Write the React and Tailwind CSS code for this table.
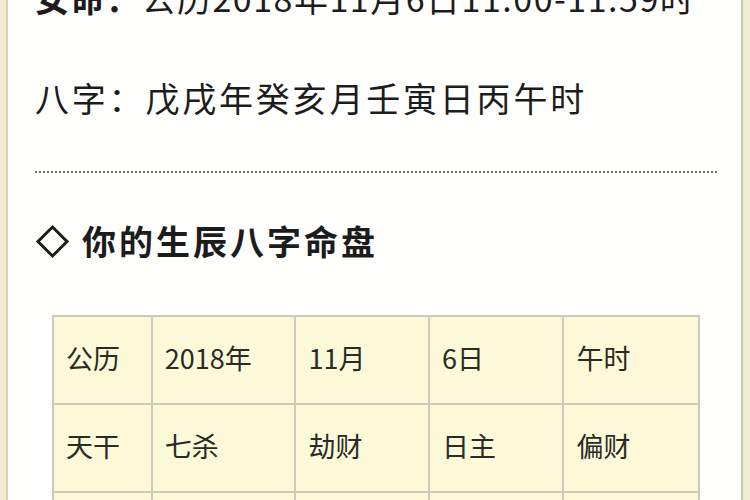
import React from "react";

const rows = [
  ["公历", "2018年", "11月", "6日", "午时"],
  ["天干", "七杀", "劫财", "日主", "偏财"],
  ["地支", "正官", "正财", "比肩", "伤官"],
];

const widths = ["w-[99px]", "w-[144px]", "w-[134px]", "w-[135px]", "w-[136px]"];

export default function App() {
  return (
    <div
      className="h-[500px] w-[750px] overflow-hidden bg-[#f1ebd4] flex"
      style={{ fontFamily: '"Noto Sans CJK SC", "Noto Sans", sans-serif' }}
    >
      <div className="ml-[6px] mr-[7px] flex-1 border-l-2 border-r-2 border-l-[#d6cfb5] border-r-[#c9c6bc] bg-[#fefefc] overflow-hidden">
        <div className="-mt-[30px] pl-[27px] pr-[24px] text-[#1c1c1c]">
          <div className="h-[56px] leading-[56px] text-[34px] tracking-[1.5px] whitespace-nowrap">
            <span className="font-bold">女命：</span>
            <span>公历2018年11月6日11:00-11:59时</span>
          </div>
          <div className="mt-[44px] h-[56px] leading-[56px] text-[34px] tracking-[2.8px] whitespace-nowrap">
            <span>八字：</span>
            <span>戊戌年癸亥月壬寅日丙午时</span>
          </div>
          <div className="mt-[45px] border-t-2 border-dotted border-[#6e6e6e]" />
          <div className="mt-[40px] h-[56px] flex items-center gap-[12px]">
            <svg width="35" height="35" viewBox="0 0 35 35" className="shrink-0">
              <path d="M17.5 3 L32 17.5 L17.5 32 L3 17.5 Z" fill="none" stroke="#1c1c1c" strokeWidth="3" strokeLinejoin="miter" />
            </svg>
            <span className="text-[34px] font-bold leading-[56px] tracking-[3px] whitespace-nowrap">你的生辰八字命盘</span>
          </div>
          <div className="mt-[46px] mx-[17px]">
            <table className="border-collapse bg-[#fcf9d9] text-[27px] text-[#2a2a26]">
              <tbody>
                {rows.map((r, i) => (
                  <tr key={i} className="h-[88px]">
                    {r.map((c, j) => (
                      <td
                        key={j}
                        className={`${widths[j]} border-2 border-[#cdcbb8] pl-[12px] pb-[6px] align-middle leading-none whitespace-nowrap`}
                      >
                        {c}
                      </td>
                    ))}
                  </tr>
                ))}
              </tbody>
            </table>
          </div>
        </div>
      </div>
    </div>
  );
}
